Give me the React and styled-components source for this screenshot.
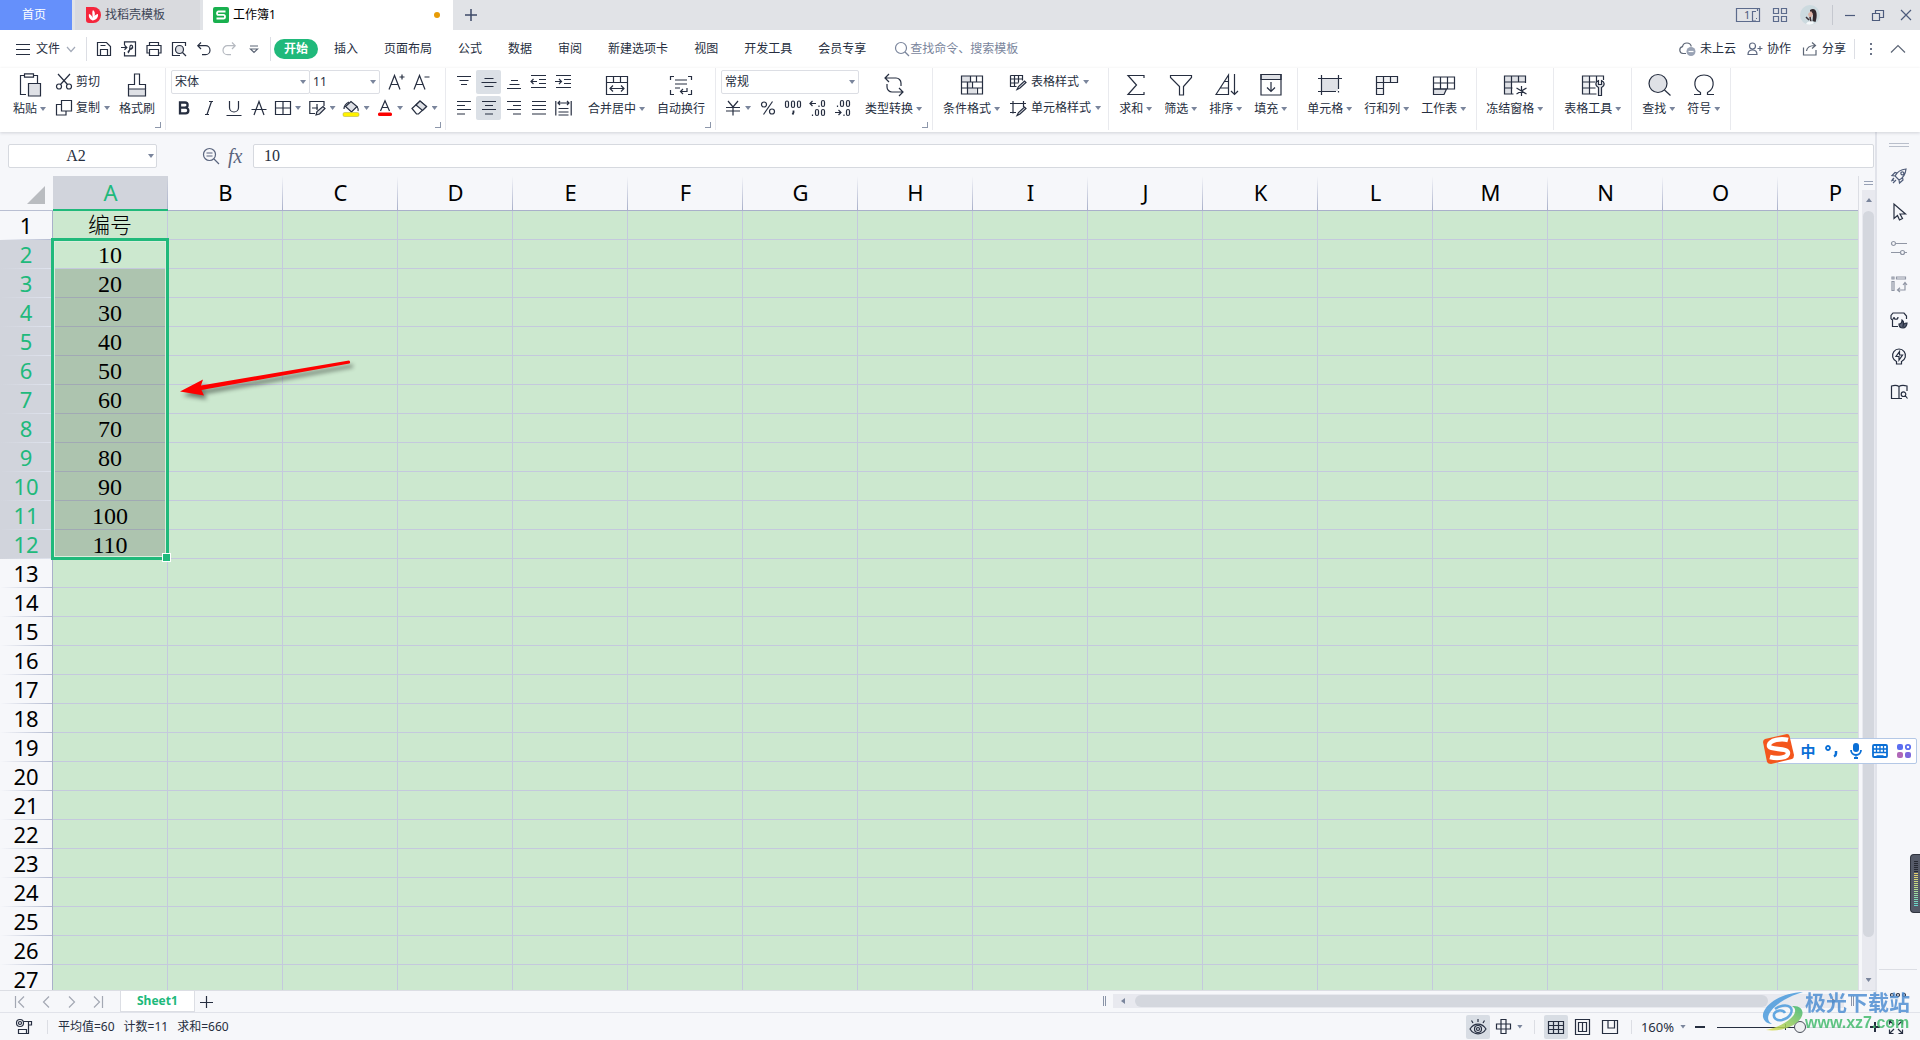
import React, { useState } from 'react';
import styled, { createGlobalStyle, css } from 'styled-components';

const INK = '#262e40';
const MUTED = '#7a859c';
const GREEN = '#20b97b';
const LINE = '#dcdee4';
const PANEL = '#f6f7fa';
const UI_FONT = '"Noto Sans", "Noto Sans CJK SC", sans-serif';
const CELL_FONT = '"Liberation Serif", "Noto Sans CJK SC", serif';

const GlobalStyle = createGlobalStyle`
  * {
    box-sizing: border-box;
  }
  body {
    margin: 0;
    overflow: hidden;
    color: ${INK};
    font-family: ${UI_FONT};
    font-size: 12px;
    line-height: 18px;
  }
  button,
  input,
  select {
    margin: 0;
    padding: 0;
    border: 0;
    background: none;
    color: inherit;
    font: inherit;
    white-space: nowrap;
  }
  input,
  select {
    outline: none;
  }
`;

const shade = '#dfe1e6';

/* [width, height, drawing] */
const ICONS = {
  menu: [14, 14, <path d="M0 2.500h14M0 7.500h14M0 12.500h14" />],
  chevronDown: [10, 10, <path d="M1 3l4 4.500L9 3" stroke="#a3aab8" />],
  chevronUp: [16, 10, <path d="M1 8.500l7-7 7 7" stroke="#5d6676" />],
  save: [16, 16, <path d="M1.500 1.500h9l4 4v9h-13zM4.500 14V8.500h7V14M4.500 4.500h5" />],
  exportPdf: [16, 16, <path d="M3.500 4V.800h11v14h-11V11M0 6.500h5.500M3.500 4.300l2.300 2.200-2.300 2.200M7 12c1-1 2-4 2-6.500 0-2 3-1.500 2.500.500-.500 2-4.500 3-4.500 5M9 8.500c1 0 2-.500 3-2" />],
  print: [16, 16, <path d="M3.500 4.500v-3h9v3M3.500 12H1V4.500h14V12h-2.500M3.500 8.500h9v6h-9z" />],
  preview: [16, 16, <><path d="M14.500 5V1.500h-13v13H9" /><circle cx="8.500" cy="8.500" r="4" fill={shade} /><path d="M11.500 11.500l3.500 3.500" /></>],
  undo: [14, 14, <path d="M4 .500L.800 3.700 4 7M1 3.700h7.500a4.500 4.500 0 0 1 0 9H5" />],
  redo: [14, 14, <path d="M10 .500l3.200 3.200L10 7M13 3.700H5.500a4.500 4.500 0 0 0 0 9H9" stroke="#b5b9c0" />],
  more: [10, 10, <path d="M1 2h8M1.500 5L5 8.500 8.500 5z" stroke="#5d6676" />],
  search: [16, 16, <><circle cx="7" cy="7" r="5.500" /><path d="M11 11l4 4" /></>],
  cloud: [17, 16, <><path d="M7 12.500H4a3.500 3.500 0 0 1-.500-6.900A4.500 4.500 0 0 1 12.300 5.500" stroke="#5d6676" /><circle cx="12" cy="10.500" r="4.500" fill="#9aa3b5" stroke="none" /><path d="M9.500 10.500h5" stroke="#fff" /></>],
  people: [16, 16, <path d="M1 13.500c0-3 2-4.500 4.500-4.500S10 10.500 10 13.500zM5.500 8a3 3 0 1 0 0-6 3 3 0 0 0 0 6zM10.500 7.500h5M13 5v5" stroke="#5d6880" />],
  share: [16, 16, <path d="M1.500 6.500v7.500h12.500V9M4.500 10c.500-4 3-5.500 8.500-5.500M10 1.500l3.500 3L10 7.500" stroke="#5d6676" />],
  dots: [4, 14, <path d="M1 2h2M1 7h2M1 12h2" strokeWidth="2" stroke="#6b7488" />],
  screens: [24, 14, <path d="M.500.500h23v13H.500zM16.500 13V3.500h3.500M17 13h3M21.500 3v-2M20 10.500h1" stroke="#5c6b8c" />],
  apps: [16, 16, <path d="M1.500 1.500h5v5h-5zM9.500 1.500h5v5h-5zM1.500 9.500h5v5h-5zM9.500 9.500h5v5h-5z" stroke="#5c6b8c" />],
  minimize: [12, 12, <path d="M1 6.500h10" stroke="#4c5b7c" />],
  restore: [12, 12, <path d="M.500 4.500h7v7h-7zM3.500 4V1.500h8v7H8" stroke="#4c5b7c" />],
  close: [12, 12, <path d="M1 1l10 10M11 1L1 11" stroke="#4c5b7c" />],
  plus: [14, 14, <path d="M7 1v12M1 7h12" stroke="#3d4a68" strokeWidth="1.500" />],
  docer: [16, 16, <><path d="M1 0h7.500a7.500 8 0 0 1 0 16H4a3 3 0 0 1-3-3z" fill="#f5263c" stroke="none" /><path d="M7.500 13.500C4 12 3.500 9 4 7c2 .500 3 2 3.500 4 .500-3-1-5 .500-8 2 1.500 2.200 4 1.500 6 .800-1 2-2 3.500-2 .500 3.500-2 6-5.500 6.500z" fill="#fff" stroke="none" /></>],
  wps: [16, 16, <><rect width="16" height="16" rx="2" fill="#19b04f" stroke="none" /><path d="M12.500 4.500H5.500c-2 0-2 3.300 0 3.300h5c2 0 2 3.700 0 3.700H3.500" stroke="#fff" strokeWidth="1.800" /></>],
  paste: [24, 24, <><path d="M8 21.500H2.500v-19H6M16 2.500h3.500V10" /><path d="M6.500.800h9v3.400h-9z" /><path d="M10.500 10.500h12v12.500h-12z" fill={shade} /></>],
  cut: [16, 16, <><path d="M2 0l9.500 10.500M14 0L4.500 10.500" /><circle cx="3" cy="12.500" r="2.500" /><circle cx="13" cy="12.500" r="2.500" /></>],
  copy: [16, 16, <path d="M5.500.500h10v10.500h-10zM5 4.500H.500v10.500h9.500V11.500" />],
  painter: [24, 24, <><path d="M3.500 16h17v7h-17z" fill={shade} /><path d="M3.500 16v-4.500h6V1h5v10.500h6V16" /></>],
  bold: [16, 16, <path d="M4 2.500h5a2.500 2.500 0 0 1 0 5.200H4zM4 7.700h5.500a2.800 2.800 0 0 1 0 5.700H4z" strokeWidth="2.300" />],
  italic: [16, 16, <path d="M8 1.500h4M4 14.500h4M10.500 1.500L6 14.500" />],
  underline: [16, 16, <path d="M3.500 1v6.500a4.500 4.500 0 0 0 9 0V1M.500 15.500h15" />],
  strike: [16, 16, <path d="M3 15l5-13.500L13 15M.500 9.500h15" />],
  border: [16, 16, <path d="M.500 1.500h15v13h-15zM8 1.500v13M.500 8h15" />],
  drawBorder: [17, 16, <><path d="M6 13.500H.800v-12H15V6M3 8h6M8 4v6" /><path d="M7 15l1-3.500 6-5 2 2-5.500 5.500z" fill={shade} /></>],
  fill: [17, 17, <><path d="M2.500 6.500L8 1.500l6 5-5.500 5.500z" fill={shade} /><path d="M1 9c0-3 2-5.500 5-7M14 6.500c1 1.500 1.500 3 1 4.500" /><rect y="12.500" width="16" height="4" rx="1.500" fill="#fff200" stroke="#a9a648" strokeWidth=".5" /></>],
  fontColor: [16, 17, <><path d="M3.500 11L8 .800 12.500 11M5 7.500h6" /><rect x="1" y="12.500" width="14" height="3.500" rx="1.500" fill="#fb0000" stroke="none" /></>],
  eraser: [17, 16, <><path d="M1 8.500L9 1l6.500 5.500-8 7.500h-2z" /><path d="M5 5l4-4 6.500 5.500-4 4z" fill={shade} /></>],
  fontUp: [17, 17, <path d="M1 15.500L6.500 1.500 12 15.500M3 10.500h7M14 .500v5M11.500 3h5" />],
  fontDown: [17, 17, <path d="M1 15.500L6.500 1.500 12 15.500M3 10.500h7M11.500 3h5" />],
  top: [16, 16, <path d="M1 2.500h14M3.500 6.500h9M5 10.500h6" />],
  middle: [16, 16, <path d="M3.500 4.500h9M.500 8.500h15M3.500 12.500h9" />],
  bottom: [16, 16, <path d="M5 6.500h7M3.500 10.500h10M1 14.500h14" />],
  outdent: [17, 16, <path d="M1 1.500h15M9 5.500h7M9 9.500h7M1 13.500h15M1 7.500h6M3.500 5L1 7.500 3.500 10" />],
  indent: [17, 16, <path d="M1 1.500h15M9 5.500h7M9 9.500h7M1 13.500h15M0 7.500h6M4 5l2.500 2.500L4 10" />],
  left: [16, 16, <path d="M1 1.500h14M1 5.500h8M1 9.500h14M1 14h8" />],
  center: [16, 16, <path d="M1 1.500h14M4 5.500h8M1 9.500h14M4 14h8" />],
  right: [16, 16, <path d="M1 1.500h14M7 5.500h8M1 9.500h14M7 14h8" />],
  justify: [16, 16, <path d="M1 1.500h14M1 5.500h14M1 9.500h14M1 14h14" />],
  spread: [17, 16, <path d="M.800 1v14.500M16.200 1v14.500M3 3h11M5 1L3 3l2 2M12 1l2 2-2 2M3.500 8.500h10M3.500 12h10M3.500 15h10" />],
  merge: [24, 24, <path d="M1.500 3.500h21v18h-21zM1.500 9.500h21M8.500 3.500v6M15.500 3.500v6M5 15.500h14M8 12.500l-3 3 3 3M16 12.500l3 3-3 3" />],
  wrap: [24, 24, <path d="M5 3.500H1.500V7M19 3.500h3.500V7M1.500 17v4.500H5M22.500 17v4.500H19M6 7h12M6 11h12M6 15h5M18 15v3.500h-6M14 16l-2.500 2.500L14 21" />],
  yen: [16, 16, <path d="M3 1l5 6 5-6M1 7.500h14M1 11h14M8 7v8.500" />],
  percent: [16, 16, <><circle cx="4" cy="4.500" r="2.500" /><circle cx="12" cy="11.500" r="2.500" /><path d="M12.500 1.500L3.500 14.500" /></>],
  thousands: [18, 16, <><rect x="1.500" y="1" width="3" height="6.500" rx="1.500" /><rect x="7.500" y="1" width="3" height="6.500" rx="1.500" /><rect x="13.500" y="1" width="3" height="6.500" rx="1.500" /><path d="M9.500 10.500v2l-1 2" strokeWidth="1.800" /></>],
  decUp: [18, 18, <><path d="M1 4.500h6M3.500 2L1 4.500 3.500 7M10 6.500v1.500M3.500 15.500v1.500" /><rect x="12.500" y="1.500" width="3" height="6" rx="1.500" /><rect x="6.500" y="10.500" width="3" height="6" rx="1.500" /><rect x="12.500" y="10.500" width="3" height="6" rx="1.500" /></>],
  decDown: [18, 18, <><path d="M3.500 6.500v1.500M1 13.500h6M4.500 11L7 13.500 4.500 16M10 15.500v1.500" /><rect x="6.500" y="1.500" width="3" height="6" rx="1.500" /><rect x="12.500" y="1.500" width="3" height="6" rx="1.500" /><rect x="12.500" y="10.500" width="3" height="6" rx="1.500" /></>],
  convert: [24, 24, <path d="M7 1L3 5l4 4M3.500 5h10.500a5 5 0 0 1 5 5v3M17 15l4 4-4 4M20.500 19H10a5 5 0 0 1-5-5v-3" />],
  condFormat: [24, 24, <><path d="M1.500 3h9v6h-9zM10.500 9h-4v6h4zM7 15h9v6H7z" fill={shade} stroke="none" /><path d="M1.500 3h21v18h-21zM1.500 9h21M1.500 15h21M10.500 3v6M16.500 3v6M7.500 9v6M12.500 9v6M7.500 15v6M17.500 15v6" /></>],
  tableStyle: [17, 17, <><path d="M.500 1.500h12v5M.500 1.500v11h6M.500 5h12M.500 9h8M4.500 1.500v11M8.500 1.500v7" /><path d="M7 15.500l1.500-3 6-5.500 1.500 1.500-6 5.500z" fill={shade} /></>],
  cellStyle: [17, 17, <><path d="M3 1v12.500M0 3.500h16M0 12.500h6M13.500 1v6" /><path d="M7 15.500l1.500-3 6-5.500 1.500 1.500-6 5.500z" fill={shade} /></>],
  sum: [24, 24, <path d="M20 5V2.500H4L12.500 12 4 21.500h16V19" />],
  filter: [24, 24, <path d="M1.500 2.500h21v2l-8 9v8.500h-4v-8.500l-9-9z" />],
  sort: [24, 24, <path d="M2 21.500L14.500 2v19.500zM6.500 15h8M10.500 8.500h4M20.500 1v20.500M17 18l3.500 3.500L24 18" />],
  fillDown: [24, 24, <><path d="M2 1.500h20v5H2z" fill={shade} /><path d="M2 1.500h20v20.500H2zM12 9v9.500M8 14.500l4 4 4-4" /></>],
  cell: [24, 24, <><path d="M4 5h16v13H4z" fill={shade} stroke="none" /><path d="M0 5.500h24M3.500 2v20M20.500 2v14M0 18.500h18M20.500 18v1.500" /></>],
  rowCol: [24, 24, <><path d="M2 3.500h21v6H2zM2 9.500h7v12H2z" fill="#f0f1f3" stroke="none" /><path d="M1.500 3.500h21v6h-14v12h-7zM8.500 3.500v6M15.500 3.500v6M1.500 9.500h7M1.500 15.500h7" /></>],
  sheet: [24, 24, <><path d="M1.500 16h13l-2.500 5.500H1.500z" fill={shade} /><path d="M1.500 4h21v12h-21zM1.500 10h21M8.500 4v12M15.500 4v12" /></>],
  freeze: [24, 24, <><path d="M1.500 3h21v6h-14v12h-7z" fill={shade} stroke="none" /><path d="M22.500 10V3h-21v18h9M1.500 9h21M1.500 15h8M8.500 3v18M15.500 3v6M18.500 13v10M13.500 15l10 6M23.500 15l-10 6" /></>],
  tableTool: [24, 24, <><path d="M2 3h7v18H2z" fill="#eceef1" stroke="none" /><path d="M22.500 7V3h-21v18h14M1.500 9h13M1.500 15h13M8.500 3v18M15.500 3v6" /><path d="M17.500 22.500v-8c-4-2-3-6 0-7v4h3v-4c3 1 4 5 0 7v8z" fill={shade} /></>],
  find: [24, 24, <><circle cx="11" cy="10.500" r="9" fill={shade} /><path d="M17.500 17l6 5.500" /></>],
  omega: [24, 24, <path d="M2 21.500h6.500V19.500C0 15 1 2 12 2s12 13 3.500 17.500v2H22" />],
  zoomOut: [18, 18, <><circle cx="7.500" cy="7.500" r="6" /><path d="M12 12l5 5M4.500 6h6M4.500 9h6" /></>],
  rocket: [18, 18, <path d="M5 9c2-4 5-6.500 11-7-.500 5.500-3 9-7 11zM5 9l-3-.500L5 5.500 7.500 6M9 13l.500 3L13 13l-.500-2.500M13 5a1.500 1.500 0 1 1-2 2 1.500 1.500 0 0 1 2-2M4 11l-2 2M6 13l-3 3M4 13l-3 1" stroke="#4f5c78" />],
  pointer: [18, 18, <path d="M4 1v14.500l3.500-3 2 4.500 3-1.500L10 11h5.500z" />],
  sliders: [18, 18, <><circle cx="3.500" cy="4.500" r="2" stroke="#9096a4" /><circle cx="12.500" cy="13.500" r="2" stroke="#9096a4" /><path d="M5.500 4.500H17M1 13.500h9.500M14.500 13.500H17" stroke="#9096a4" /></>],
  pivot: [18, 18, <path d="M2 2h2v2H2zM6.500 2h9v2h-9zM2 6.500h2v9H2zM15 8v7H8M13 10l2-2.500L17 10M10 12.800L7.500 15l2.500 2" stroke="#9096a4" />],
  shop: [18, 18, <><path d="M8 15.500H2.500V9M1 8V4.500L3 2h11l2.500 3V8M1 8c1.500 1 3 0 3-2M4 6c0 3 4 3 4 0" /><path d="M9 13c2 0 3-1 3-4 3 2 1 4 1 7 0-2 1-4 4-4 0 3-2 5-4 5s-4-1-4-4z" fill="#596174" /></>],
  bulb: [18, 18, <path d="M6.500 17v-2.500a6.500 6.500 0 1 1 5 0V17zM9.500 4.500L6 9.500h3v3.500l3.500-5h-3z" />],
  book: [18, 18, <path d="M9 3.500v12H1.500V3C5 2 7.500 2.500 9 3.500zM9 3.500C10.500 2.500 13 2 17 3v5M9 15.500h3M13.500 13.500a2.300 2.300 0 1 0 0-4.600 2.300 2.300 0 0 0 0 4.600zM15.500 13l2 2.500" />],
  moreH: [18, 6, <path d="M3 1.500a1.500 1.500 0 1 0 0 3 1.500 1.500 0 0 0 0-3zM9 1.500a1.500 1.500 0 1 0 0 3 1.500 1.500 0 0 0 0-3zM15 1.500a1.500 1.500 0 1 0 0 3 1.500 1.500 0 0 0 0-3z" />],
  grip: [20, 5, <path d="M0 .500h20M0 3.500h20" stroke="#b9bfcb" />],
  first: [12, 14, <path d="M1.500 1v12M10 1.500L4.500 7l5.500 5.500" stroke="#a3a8b3" />],
  prev: [12, 14, <path d="M9 1.500L3.500 7 9 12.500" stroke="#a3a8b3" />],
  next: [12, 14, <path d="M3 1.500L8.500 7 3 12.500" stroke="#a3a8b3" />],
  last: [12, 14, <path d="M10.500 1v12M2 1.500L7.500 7 2 12.500" stroke="#a3a8b3" />],
  record: [18, 18, <><circle cx="5" cy="5" r="3.500" /><circle cx="5" cy="5" r="1.500" /><path d="M8.500 3.500h8V7h-3M13.500 3.500v12H3.500v-4h8v4" /></>],
  eye: [18, 18, <><path d="M1 11c4-6.500 12-6.500 16 0-4 6.500-12 6.500-16 0zM9 4V1M4 5L2.500 2.500M14 5l1.500-2.500" /><circle cx="9" cy="11" r="3.500" /><circle cx="9" cy="11" r="1.500" /></>],
  cross: [18, 18, <path d="M6 1.500h5v14H6zM1.500 6h14v5h-14z" />],
  gridView: [18, 18, <path d="M1.500 3.500h15v12h-15zM1.500 7.500h15M1.500 11.500h15M6.500 3.500v12M11.500 3.500v12" />],
  pageView: [18, 18, <path d="M1.500 1.500h14v15h-14zM4.500 4.500h8v9h-8zM8.500 4.500v9" />],
  splitView: [18, 18, <path d="M1.500 2.500h15v13h-15zM7 2.500v7.500h6.500V2.500" />],
  minus: [12, 12, <path d="M1 6h10" strokeWidth="2" />],
  plusBold: [12, 12, <path d="M1 6h10M6 1v10" strokeWidth="2" />],
  fullscreen: [16, 16, <path d="M10 6l4.500-4.500M10.500 1.500h4v4M6 6L1.500 1.500M1.500 5.500v-4h4M10 10l4.500 4.500M10.500 14.500h4v-4M6 10l-4.500 4.500M1.500 10.500v4h4" />],
  sheetPlus: [14, 14, <path d="M7.500 1v12M1 7.500h13" />],
  corner: [19, 19, <path d="M18 0v18H0z" fill="#b9bcc0" stroke="none" />],
};

const Svg = styled.svg`
  flex: none;
  display: block;
  fill: none;
  stroke: currentColor;
  stroke-width: 1.2;
  overflow: visible;
`;

function Icon({ name, className }) {
  const [w, h, drawing] = ICONS[name];
  return (
    <Svg className={className} width={w} height={h} viewBox={`0 0 ${w} ${h}`} aria-hidden="true">
      {drawing}
    </Svg>
  );
}

const Caret = styled.i`
  flex: none;
  width: 6px;
  height: 4px;
  background: ${MUTED};
  clip-path: polygon(0 0, 100% 0, 50% 100%);
  ${({ $dir }) => $dir === 'up' && 'transform: rotate(180deg);'}
  ${({ $dir }) => $dir === 'left' && 'transform: rotate(90deg);'}
  ${({ $dir }) => $dir === 'right' && 'transform: rotate(-90deg);'}
`;

const Page = styled.div`
  display: flex;
  flex-direction: column;
  height: 100vh;
  overflow: hidden;
  background: ${PANEL};
`;

/* ---- title bar ---- */
const TitleBar = styled.header`
  display: flex;
  flex: none;
  height: 30px;
  background: #e1e3e7;
`;

const WindowTab = styled.button`
  display: flex;
  align-items: center;
  gap: 4px;
  width: ${({ $width }) => $width}px;
  padding: 0 10px;
  margin-right: 3px;
  background: #d9dade;
  color: #3d4557;
  text-align: left;
  ${({ $home }) => $home && 'background: #6590fb; color: #fff; padding: 0 22px;'}
  ${({ $active }) => $active && 'background: #fff; color: #000; margin: 0;'}
`;

const UnsavedDot = styled.span`
  width: 6px;
  height: 6px;
  margin: 0 3px 0 auto;
  border-radius: 50%;
  background: #e79b06;
`;

const NewTab = styled.button`
  display: grid;
  place-items: center;
  width: 36px;
`;

const WindowTools = styled.div`
  display: flex;
  align-items: center;
  gap: 12px;
  margin-left: auto;
`;

const Screens = styled.button`
  display: grid;
  place-items: center start;
  > * {
    grid-area: 1 / 1;
  }
  span {
    padding-left: 8px;
    font-size: 11px;
    line-height: 14px;
    color: #4c5b7c;
  }
`;

const PlainButton = styled.button`
  display: grid;
  place-items: center;
`;

const WindowControls = styled.div`
  display: flex;
  height: 20px;
  padding-left: 3px;
  border-left: 1px solid #c5c8cf;
  button {
    display: grid;
    place-items: center;
    width: 28px;
  }
`;

/* ---- menu bar ---- */
const MenuBar = styled.nav`
  display: flex;
  flex: none;
  align-items: center;
  height: 38px;
  background: #fff;
`;

const FileButton = styled.button`
  display: flex;
  align-items: center;
  gap: 6px;
  padding: 0 10px 0 16px;
`;

const Divider = styled.span`
  flex: none;
  width: 1px;
  height: ${({ $height = 24 }) => $height}px;
  background: ${LINE};
`;

const QuickTools = styled.div`
  display: flex;
  padding-left: 4px;
  margin-right: 4px;
  button {
    display: grid;
    place-items: center;
    width: 25px;
    height: 24px;
  }
`;

const MenuItem = styled.button`
  height: 20px;
  padding: 0 10px;
  margin: 0 3px;
  line-height: 20px;
  border-radius: 10px;
  ${({ $active }) => $active && `background: ${GREEN}; color: #fff; font-weight: 700;`}
`;

const CommandSearch = styled.label`
  display: flex;
  align-items: center;
  margin-left: 15px;
  color: ${MUTED};
  input {
    width: 130px;
  }
  input::placeholder {
    color: ${MUTED};
    opacity: 1;
  }
`;

const AccountTools = styled.div`
  display: flex;
  align-items: center;
  gap: 11px;
  padding-right: 8px;
  margin-left: auto;
  button {
    display: flex;
    align-items: center;
    gap: 4px;
  }
`;

const MenuEdge = styled.div`
  display: flex;
  align-items: center;
  gap: 17px;
  padding: 0 14px;
`;

/* ---- ribbon ---- */
const Ribbon = styled.section`
  position: relative;
  display: flex;
  flex: none;
  height: 64px;
  background: #fff;
  box-shadow: 0 1px 3px rgba(60, 66, 84, 0.2);
`;

const Group = styled.div`
  position: relative;
  display: flex;
  height: 62px;
  padding: 2px 4px 0 ${({ $lead = 4 }) => $lead}px;
  border-right: 1px solid #e9eaee;
  ${({ $launcher }) =>
    $launcher &&
    css`
      &::after {
        content: '';
        position: absolute;
        right: 4px;
        bottom: 2px;
        width: 5px;
        height: 5px;
        border: solid #8d97ab;
        border-width: 0 1px 1px 0;
      }
    `}
`;

const BigButton = styled.button`
  display: flex;
  flex-direction: column;
  align-items: center;
  height: 50px;
  padding: 3px 6px 0;
  span {
    display: flex;
    align-items: center;
    gap: 3px;
    padding-top: 3px;
    line-height: 18px;
  }
`;

const Rows = styled.div`
  display: grid;
  grid-template-rows: 24px 24px;
  gap: 2px;
  padding-right: ${({ $end = 0 }) => $end}px;
`;

const Row = styled.div`
  display: flex;
`;

const SmallButton = styled.button`
  display: flex;
  align-items: center;
  gap: 4px;
  padding: 0 3px 0 4px;
`;

const Tool = styled.button`
  display: flex;
  align-items: center;
  justify-content: center;
  gap: 4px;
  width: ${({ $wide }) => ($wide ? 34 : 25)}px;
  height: 24px;
  border-radius: 2px;
  background: ${({ $pressed }) => ($pressed ? '#dbe0e6' : 'none')};
`;

const Picker = styled.label`
  display: flex;
  align-items: center;
  width: ${({ $width }) => $width}px;
  height: 24px;
  padding: 0 3px;
  border: 1px solid ${LINE};
  border-radius: 2px;
  & + & {
    margin: 0 4px 0 -1px;
  }
  select {
    flex: 1;
    min-width: 0;
    height: 22px;
    appearance: none;
  }
`;

/* ---- work area ---- */
const Body = styled.main`
  display: flex;
  flex: 1;
  min-height: 0;
`;

const Workbook = styled.div`
  display: flex;
  flex: 1;
  flex-direction: column;
  min-width: 0;
`;

const FormulaBar = styled.div`
  display: flex;
  flex: none;
  align-items: center;
  height: 44px;
  padding: 4px 1px 0 8px;
`;

const field = css`
  height: 24px;
  border: 1px solid #d6d9df;
  border-radius: 2px;
  background: #fff;
  font-family: ${CELL_FONT};
  font-size: 16px;
`;

const NameBox = styled.label`
  ${field}
  display: flex;
  align-items: center;
  width: 149px;
  padding-right: 2px;
  input {
    flex: 1;
    min-width: 0;
    padding-right: 5px;
    text-align: center;
  }
`;

const FormulaTools = styled.div`
  display: flex;
  align-items: center;
  gap: 8px;
  width: 96px;
  padding-left: 45px;
  color: #5a657e;
`;

const Fx = styled.button`
  font-family: ${CELL_FONT};
  font-size: 20px;
  font-style: italic;
`;

const FormulaInput = styled.input`
  ${field}
  flex: 1;
  min-width: 0;
  padding: 0 10px;
`;

const GridArea = styled.div`
  display: flex;
  flex: 1;
  min-height: 0;
`;

const Viewport = styled.div`
  position: relative;
  flex: 1;
  min-width: 0;
  overflow: hidden;
  background: #cce8cf;
`;

const SheetTable = styled.table`
  width: 1px;
  table-layout: fixed;
  border-spacing: 0;
  col {
    width: 115px;
  }
  col:first-child {
    width: 53px;
  }
`;

const headText = css`
  padding: 0 0 2px;
  font-size: 22px;
  font-weight: 400;
  line-height: 26px;
  color: ${({ $on }) => ($on ? GREEN : '#000')};
  background-color: ${({ $on }) => ($on ? '#d1d4dc' : PANEL)};
`;

const ColHead = styled.th`
  ${headText}
  height: 35px;
  border-bottom: ${({ $on }) => ($on ? `2px solid ${GREEN}` : '1px solid #a9b0ca')};
  background-image: linear-gradient(to bottom, rgba(169, 176, 202, 0), #a9b0ca);
  background-position: right top;
  background-repeat: no-repeat;
  background-size: 1px 100%;
`;

const CornerHead = styled.th`
  height: 35px;
  padding: 5px 7px 0 0;
  border-bottom: 1px solid #b9bfd2;
  background: ${PANEL};
  svg {
    margin-left: auto;
  }
`;

const RowHead = styled.th`
  ${headText}
  height: 29px;
  border-right: 1px solid #a9b0ca;
  background-image: linear-gradient(to right, rgba(185, 192, 214, 0), ${({ $on }) => ($on ? '#dfe3ee' : '#b3bad0')});
  background-position: left bottom;
  background-repeat: no-repeat;
  background-size: 100% 1px;
`;

const Cell = styled.td`
  position: ${({ $anchor }) => ($anchor ? 'relative' : 'static')};
  height: 29px;
  padding: 2px 0 0;
  border: solid ${({ $picked }) => ($picked ? '#a1a9b4' : '#c4c9dd')};
  border-width: 0 1px 1px 0;
  background: ${({ $picked }) => ($picked ? '#adc4af' : 'none')};
  color: #000;
  font-family: ${CELL_FONT};
  font-size: ${({ $title }) => ($title ? 22 : 24)}px;
  font-weight: ${({ $title }) => ($title ? 300 : 400)};
  line-height: 26px;
  text-align: center;
`;

const Selection = styled.div`
  position: absolute;
  top: -2px;
  right: -2px;
  left: -2px;
  height: 322px;
  border: 3px solid ${GREEN};
  box-shadow: inset 0 0 0 1px #d9eedc;
  pointer-events: none;
  &::after {
    content: '';
    position: absolute;
    right: -5px;
    bottom: -5px;
    width: 7px;
    height: 7px;
    border: 1px solid #fff;
    background: ${GREEN};
  }
`;

const Arrow = styled.svg`
  position: absolute;
  top: 180px;
  left: 172px;
  overflow: visible;
  filter: drop-shadow(3px 4px 2px rgba(0, 0, 0, 0.45));
`;

const VScroll = styled.div`
  display: flex;
  flex: none;
  flex-direction: column;
  width: 17px;
  padding-left: 3px;
  border-left: 1px solid ${LINE};
`;

const SplitHandle = styled.div`
  height: 4px;
  margin: 5px 2px;
  border: solid #98a2b6;
  border-width: 1px 0;
`;

const Track = styled.div`
  display: flex;
  flex: 1;
  flex-direction: ${({ $horizontal }) => ($horizontal ? 'row' : 'column')};
  background: #e8e9ef;
`;

const ScrollArrow = styled.button`
  display: grid;
  flex: none;
  place-items: center;
  width: ${({ $horizontal }) => ($horizontal ? 21 : 13)}px;
  height: ${({ $horizontal }) => ($horizontal ? 14 : 20)}px;
`;

const Thumb = styled.div`
  flex: ${({ $share }) => $share};
  margin: 1px;
  border-radius: 6px;
  background: #d4d7de;
`;

const Rest = styled.div`
  flex: ${({ $share }) => $share};
`;

const SheetBar = styled.div`
  display: grid;
  flex: none;
  grid-template-columns: minmax(0, 10fr) minmax(0, 7fr);
  height: 22px;
  border-top: 1px solid ${LINE};
`;

const SheetTabs = styled.div`
  display: flex;
  align-items: center;
  padding-left: 7px;
`;

const NavButton = styled.button`
  display: grid;
  place-items: center;
  width: 26px;
`;

const SheetTab = styled.button`
  height: 21px;
  padding: 0 16px;
  margin-left: 9px;
  margin-right: 4px;
  border: solid ${LINE};
  border-width: 0 1px 1px;
  background: #fff;
  color: ${GREEN};
  font-weight: 700;
`;

const HScroll = styled.div`
  display: flex;
  gap: 7px;
  padding: 3px 21px 4px 0;
`;

const PaneGrip = styled.div`
  width: 3px;
  margin: 2px 0;
  border: solid #8a94a8;
  border-width: 0 1px;
`;

const SidePanel = styled.aside`
  display: flex;
  flex: none;
  flex-direction: column;
  align-items: center;
  width: 45px;
  padding-top: 11px;
  border-left: 2px solid #e1e3ea;
`;

const SideTools = styled.div`
  padding-top: 10px;
`;

const SideButton = styled.button`
  display: grid;
  place-items: center;
  width: 34px;
  height: 36px;
`;

const SideFooter = styled.div`
  display: flex;
  flex-direction: column;
  align-items: center;
  align-self: stretch;
  height: 43px;
  padding-top: 22px;
  margin: auto 3px 0 2px;
  border-top: 1px solid ${LINE};
`;

/* ---- status bar ---- */
const StatusBar = styled.footer`
  display: flex;
  flex: none;
  align-items: center;
  height: 28px;
  border-top: 1px solid #e1e3ea;
`;

const RecordButton = styled.button`
  display: grid;
  place-items: center;
  width: 47px;
`;

const Summary = styled.div`
  display: flex;
  gap: 9px;
  padding-left: 10px;
`;

const ViewTools = styled.div`
  display: flex;
  align-items: center;
  gap: 3px;
  margin-left: auto;
  padding-right: 12px;
`;

const ViewButton = styled.button`
  display: flex;
  align-items: center;
  justify-content: center;
  gap: 4px;
  width: ${({ $wide }) => ($wide ? 32 : 24)}px;
  height: 24px;
  border-radius: 2px;
  background: ${({ $pressed }) => ($pressed ? '#d8dde4' : 'none')};
`;

const ViewDivider = styled(Divider)`
  margin: 0 6px;
`;

const ZoomValue = styled.button`
  display: flex;
  align-items: center;
  gap: 6px;
  margin-right: 5px;
  font-size: 13px;
`;

const ZoomRange = styled.input`
  width: 144px;
  height: 14px;
  margin: 0 5px 0 8px;
  appearance: none;
  background:
    linear-gradient(${INK}, ${INK}) 68px 4px / 1px 6px no-repeat,
    linear-gradient(to right, ${INK} 57%, #d5d8df 57%) 0 7px / 100% 1px no-repeat;
  &::-webkit-slider-thumb {
    width: 12px;
    height: 12px;
    appearance: none;
    border: 1px solid #4a4f5a;
    border-radius: 50%;
    background: #eef0f2;
  }
`;

/* ---- floating pieces ---- */
const InputMethod = styled.div`
  position: fixed;
  right: 3px;
  bottom: 276px;
  display: flex;
  align-items: center;
  width: 140px;
  height: 26px;
  padding-left: 18px;
  border: 1px solid #b4c8e6;
  border-radius: 2px;
  background: #fff;
  color: #0a6fd6;
  button {
    display: grid;
    place-items: center;
    width: 24px;
    height: 24px;
    font-size: 15px;
    font-weight: 700;
  }
`;

const ImeLogo = styled.svg`
  position: absolute;
  top: -6px;
  left: -16px;
`;

const LevelMeter = styled.div`
  position: fixed;
  right: 0;
  bottom: 127px;
  width: 10px;
  height: 59px;
  padding: 6px 0 6px 3px;
  border: 1px solid #30343f;
  border-right: 0;
  border-radius: 4px 0 0 4px;
  background: #555a68;
  i {
    display: block;
    width: 4px;
    height: 45px;
    background:
      repeating-linear-gradient(to bottom, transparent 0 1px, #555a68 1px 2px),
      linear-gradient(to bottom, #252832 0 26%, #e8cf6b 26%, #b9df8b 60%, #62d6cf);
  }
`;

const Watermark = styled.div`
  position: fixed;
  right: 10px;
  bottom: 7px;
  display: flex;
  gap: 1px;
  opacity: 0.85;
  pointer-events: none;
  p {
    margin: 0;
    font-size: 21px;
    font-weight: 700;
    line-height: 22px;
    color: #4f8fd2;
  }
  p + p {
    font-family: 'Liberation Sans', sans-serif;
    font-size: 16px;
    line-height: 20px;
    color: #45bb6e;
  }
`;

const quickTools = ['save', 'exportPdf', 'print', 'preview', 'undo', 'redo', 'more'];
const menus = ['开始', '插入', '页面布局', '公式', '数据', '审阅', '新建选项卡', '视图', '开发工具', '会员专享'];
const columns = 'ABCDEFGHIJKLMNOP'.split('');
const rows = Array.from({ length: 27 }, (_, i) => i + 1);
const numbers = [10, 20, 30, 40, 50, 60, 70, 80, 90, 100, 110];
const sideTools = ['rocket', 'pointer', 'sliders', 'pivot', 'shop', 'bulb', 'book'];

function Big({ icon, label, plain }) {
  return (
    <BigButton>
      <Icon name={icon} />
      <span>
        {label}
        {!plain && <Caret />}
      </span>
    </BigButton>
  );
}

function Small({ icon, label, plain }) {
  return (
    <SmallButton>
      <Icon name={icon} />
      {label}
      {!plain && <Caret />}
    </SmallButton>
  );
}

function Tools({ names, pressed, drop }) {
  return names.map((name) => (
    <Tool key={name} aria-label={name} $pressed={name === pressed} $wide={drop}>
      <Icon name={name} />
      {drop && <Caret />}
    </Tool>
  ));
}

function Select({ label, value, width }) {
  return (
    <Picker $width={width}>
      <select aria-label={label} defaultValue={value}>
        <option>{value}</option>
      </select>
      <Caret />
    </Picker>
  );
}

function TopBar() {
  return (
    <TitleBar>
      <WindowTab $home $width={72}>
        首页
      </WindowTab>
      <WindowTab $width={125}>
        <Icon name="docer" />
        找稻壳模板
      </WindowTab>
      <WindowTab $active $width={250}>
        <Icon name="wps" />
        工作簿1
        <UnsavedDot />
      </WindowTab>
      <NewTab aria-label="新建">
        <Icon name="plus" />
      </NewTab>
      <WindowTools>
        <Screens>
          <Icon name="screens" />
          <span>1</span>
        </Screens>
        <PlainButton aria-label="应用">
          <Icon name="apps" />
        </PlainButton>
        <PlainButton aria-label="账号">
          <svg width="20" height="20" viewBox="0 0 20 20">
            <circle cx="10" cy="10" r="10" fill="#ccdadf" />
            <path d="M10 5c3-2 6-1 6.500 3 .500 3 0 6-1 9l-3-1 .500-6-3-2z" fill="#2f272c" />
            <path d="M8 9l3-3 2 3-2 4-2-1z" fill="#dcb3a6" />
            <path d="M6 12l3 3M10 12l1 5" stroke="#3b3238" strokeWidth="1.500" />
            <path d="M6 19c1-3 6-4 8-1-2 2-5 2-8 1z" fill="#f5f8fa" />
          </svg>
        </PlainButton>
        <WindowControls>
          {['minimize', 'restore', 'close'].map((name) => (
            <button key={name} aria-label={name}>
              <Icon name={name} />
            </button>
          ))}
        </WindowControls>
      </WindowTools>
    </TitleBar>
  );
}

function Menu() {
  return (
    <MenuBar>
      <FileButton>
        <Icon name="menu" />
        文件
        <Icon name="chevronDown" />
      </FileButton>
      <Divider />
      <QuickTools>
        {quickTools.map((name) => (
          <button key={name} aria-label={name}>
            <Icon name={name} />
          </button>
        ))}
      </QuickTools>
      <Divider />
      {menus.map((name, i) => (
        <MenuItem key={name} $active={i === 0}>
          {name}
        </MenuItem>
      ))}
      <CommandSearch>
        <Icon name="search" />
        <input aria-label="查找命令" placeholder="查找命令、搜索模板" />
      </CommandSearch>
      <AccountTools>
        <button>
          <Icon name="cloud" />
          未上云
        </button>
        <button>
          <Icon name="people" />
          协作
        </button>
        <button>
          <Icon name="share" />
          分享
        </button>
      </AccountTools>
      <Divider $height={20} />
      <MenuEdge>
        <PlainButton aria-label="更多">
          <Icon name="dots" />
        </PlainButton>
        <PlainButton aria-label="收起">
          <Icon name="chevronUp" />
        </PlainButton>
      </MenuEdge>
    </MenuBar>
  );
}

function RibbonBar() {
  return (
    <Ribbon>
      <Group $lead={7} $launcher>
        <Big icon="paste" label="粘贴" />
        <Rows>
          <Small icon="cut" label="剪切" plain />
          <Small icon="copy" label="复制" />
        </Rows>
        <Big icon="painter" label="格式刷" plain />
      </Group>
      <Group $lead={5} $launcher>
        <Rows>
          <Row>
            <Select label="字体" value="宋体" width={139} />
            <Select label="字号" value="11" width={71} />
            <Tools names={['fontUp', 'fontDown']} />
          </Row>
          <Row>
            <Tools names={['bold', 'italic', 'underline', 'strike']} />
            <Tools names={['border', 'drawBorder', 'fill', 'fontColor', 'eraser']} drop />
          </Row>
        </Rows>
      </Group>
      <Group $lead={5} $launcher>
        <Rows $end={6}>
          <Row>
            <Tools names={['top', 'middle', 'bottom', 'outdent', 'indent']} pressed="middle" />
          </Row>
          <Row>
            <Tools names={['left', 'center', 'right', 'justify', 'spread']} pressed="center" />
          </Row>
        </Rows>
        <Big icon="merge" label="合并居中" />
        <Big icon="wrap" label="自动换行" plain />
      </Group>
      <Group $lead={5} $launcher>
        <Rows>
          <Select label="数字格式" value="常规" width={138} />
          <Row>
            <Tools names={['yen']} drop />
            <Tools names={['percent', 'thousands', 'decUp', 'decDown']} />
          </Row>
        </Rows>
        <Big icon="convert" label="类型转换" />
      </Group>
      <Group>
        <Big icon="condFormat" label="条件格式" />
        <Rows>
          <Small icon="tableStyle" label="表格样式" />
          <Small icon="cellStyle" label="单元格样式" />
        </Rows>
      </Group>
      <Group>
        <Big icon="sum" label="求和" />
        <Big icon="filter" label="筛选" />
        <Big icon="sort" label="排序" />
        <Big icon="fillDown" label="填充" />
      </Group>
      <Group $lead={3}>
        <Big icon="cell" label="单元格" />
        <Big icon="rowCol" label="行和列" />
        <Big icon="sheet" label="工作表" />
      </Group>
      <Group $lead={3}>
        <Big icon="freeze" label="冻结窗格" />
      </Group>
      <Group>
        <Big icon="tableTool" label="表格工具" />
      </Group>
      <Group>
        <Big icon="find" label="查找" />
        <Big icon="omega" label="符号" />
      </Group>
    </Ribbon>
  );
}

function cellText(column, row) {
  if (column !== 'A') return null;
  return row === 1 ? '编号' : numbers[row - 2];
}

function Sheet() {
  return (
    <Viewport>
      <SheetTable>
        <colgroup>
          <col />
          {columns.map((c) => (
            <col key={c} />
          ))}
        </colgroup>
        <thead>
          <tr>
            <CornerHead>
              <Icon name="corner" />
            </CornerHead>
            {columns.map((c) => (
              <ColHead key={c} scope="col" $on={c === 'A'}>
                {c}
              </ColHead>
            ))}
          </tr>
        </thead>
        <tbody>
          {rows.map((r) => (
            <tr key={r}>
              <RowHead scope="row" $on={r >= 2 && r <= 12}>
                {r}
              </RowHead>
              {columns.map((c) => {
                const anchor = c === 'A' && r === 2;
                return (
                  <Cell key={c} $anchor={anchor} $picked={c === 'A' && r > 2 && r <= 12} $title={r === 1}>
                    {cellText(c, r)}
                    {anchor && <Selection />}
                  </Cell>
                );
              })}
            </tr>
          ))}
        </tbody>
      </SheetTable>
      <Arrow width="180" height="40" viewBox="0 0 180 40">
        <path d="M8 35.500L31 23.500l-2 6L177 4.500q2 1 .500 3L29.500 34l2.500 5.500z" fill="#fe0000" />
      </Arrow>
    </Viewport>
  );
}

function ImeBar() {
  return (
    <InputMethod>
      <ImeLogo width="34" height="34" viewBox="0 0 34 34">
        <path d="M3 6L25 1q2 0 2.500 2l4.500 19q0 3-2 4L9 31q-3 0-4-2L1 9q0-2 2-3z" fill="#f4561c" />
        <path d="M26 7C19 5 8 7 7 12c-1 6 19 2 19 8 0 5-11 6-18 4" fill="none" stroke="#fff" strokeWidth="4.500" />
      </ImeLogo>
      <button>中</button>
      <button aria-label="标点">
        <svg width="16" height="16" viewBox="0 0 16 16" fill="none" stroke="currentColor">
          <circle cx="4" cy="5" r="2" strokeWidth="1.800" />
          <path d="M12 8v2.500q0 2-2 3" strokeWidth="2.500" />
        </svg>
      </button>
      <button aria-label="语音">
        <svg width="16" height="18" viewBox="0 0 16 18" fill="none" stroke="currentColor" strokeWidth="2">
          <rect x="5" y="1" width="6" height="9" rx="3" fill="currentColor" stroke="none" />
          <path d="M3 8a5 5 0 0 0 10 0M8 13v1.500M6 16h4" strokeWidth="1.800" />
        </svg>
      </button>
      <button aria-label="键盘">
        <svg width="16" height="14" viewBox="0 0 16 14" fill="none" stroke="currentColor" strokeWidth="1.800">
          <rect x="1" y="1" width="14" height="12" rx="1" />
          <path d="M1 5h14M1 8.500h14M4.500 1v7.500M8 1v7.500M11.500 1v7.500M4.500 12h7" strokeWidth="1.300" />
        </svg>
      </button>
      <button aria-label="工具箱">
        <svg width="16" height="16" viewBox="0 0 16 16">
          <rect x="1" y="1" width="6" height="6" rx="2" fill="#5b6ef0" />
          <circle cx="12" cy="4" r="2.200" fill="none" stroke="#5b6ef0" strokeWidth="1.800" />
          <rect x="1" y="9" width="6" height="6" rx="2" fill="#b068b8" />
          <rect x="9" y="9" width="6" height="6" rx="2" fill="#7d68dd" />
        </svg>
      </button>
    </InputMethod>
  );
}

function SiteMark() {
  return (
    <Watermark>
      <svg width="42" height="40" viewBox="0 0 42 40">
        <defs>
          <linearGradient id="leaf" x1="0" y1="1" x2="1" y2="0">
            <stop offset="0" stopColor="#e6e04c" />
            <stop offset="1" stopColor="#35b46f" />
          </linearGradient>
        </defs>
        <path d="M41 1C20 2 4 12 1 23c-1 6 4 10 9 10-5-3-5-8-1-13C15 12 27 5 41 1z" fill="#4a9bdc" />
        <path d="M30 15c9-1 13 5 9 12C34 35 20 41 4 39c11-2 22-8 27-14 3-4 3-8-1-10z" fill="url(#leaf)" />
        <path d="M23 22c-2-4-9-3-11 1-1 4 3 7 8 6 8-2 12-9 8-13-4-3-11-1-15 2" fill="none" stroke="#4a9bdc" strokeWidth="2.500" />
      </svg>
      <div>
        <p>极光下载站</p>
        <p>www.xz7.com</p>
      </div>
    </Watermark>
  );
}

export default function App() {
  const [zoom, setZoom] = useState(58);

  return (
    <Page>
      <GlobalStyle />
      <TopBar />
      <Menu />
      <RibbonBar />
      <Body>
        <Workbook>
          <FormulaBar>
            <NameBox>
              <input aria-label="名称框" defaultValue="A2" />
              <Caret />
            </NameBox>
            <FormulaTools>
              <PlainButton aria-label="浏览公式结果">
                <Icon name="zoomOut" />
              </PlainButton>
              <Fx>fx</Fx>
            </FormulaTools>
            <FormulaInput aria-label="编辑栏" defaultValue="10" />
          </FormulaBar>
          <GridArea>
            <Sheet />
            <VScroll>
              <SplitHandle />
              <Track>
                <ScrollArrow aria-label="向上">
                  <Caret $dir="up" />
                </ScrollArrow>
                <Thumb $share={726} />
                <Rest $share={32} />
                <ScrollArrow aria-label="向下">
                  <Caret />
                </ScrollArrow>
              </Track>
            </VScroll>
          </GridArea>
          <SheetBar>
            <SheetTabs>
              {['first', 'prev', 'next', 'last'].map((name) => (
                <NavButton key={name} aria-label={name}>
                  <Icon name={name} />
                </NavButton>
              ))}
              <SheetTab>Sheet1</SheetTab>
              <PlainButton aria-label="新建工作表">
                <Icon name="sheetPlus" />
              </PlainButton>
            </SheetTabs>
            <HScroll>
              <PaneGrip />
              <Track $horizontal>
                <ScrollArrow $horizontal aria-label="向左">
                  <Caret $dir="left" />
                </ScrollArrow>
                <Thumb $share={635} />
                <Rest $share={54} />
                <ScrollArrow $horizontal aria-label="向右">
                  <Caret $dir="right" />
                </ScrollArrow>
              </Track>
              <PaneGrip />
            </HScroll>
          </SheetBar>
        </Workbook>
        <SidePanel>
          <Icon name="grip" />
          <SideTools>
            {sideTools.map((name) => (
              <SideButton key={name} aria-label={name}>
                <Icon name={name} />
              </SideButton>
            ))}
          </SideTools>
          <SideFooter>
            <PlainButton aria-label="更多工具">
              <Icon name="moreH" />
            </PlainButton>
          </SideFooter>
        </SidePanel>
      </Body>
      <StatusBar>
        <RecordButton aria-label="录制">
          <Icon name="record" />
        </RecordButton>
        <Divider $height={14} />
        <Summary>
          <span>平均值=60</span>
          <span>计数=11</span>
          <span>求和=660</span>
        </Summary>
        <ViewTools>
          <ViewButton $pressed aria-label="护眼模式">
            <Icon name="eye" />
          </ViewButton>
          <ViewButton $wide aria-label="阅读模式">
            <Icon name="cross" />
            <Caret />
          </ViewButton>
          <ViewDivider $height={14} />
          <ViewButton $pressed aria-label="普通视图">
            <Icon name="gridView" />
          </ViewButton>
          <ViewButton aria-label="分页预览">
            <Icon name="pageView" />
          </ViewButton>
          <ViewButton aria-label="页面布局">
            <Icon name="splitView" />
          </ViewButton>
          <ViewDivider $height={14} />
          <ZoomValue>
            160%
            <Caret />
          </ZoomValue>
          <PlainButton aria-label="缩小">
            <Icon name="minus" />
          </PlainButton>
          <ZoomRange
            type="range"
            aria-label="缩放"
            value={zoom}
            onChange={(e) => setZoom(e.target.value)}
          />
          <PlainButton aria-label="放大">
            <Icon name="plusBold" />
          </PlainButton>
          <ViewButton aria-label="全屏">
            <Icon name="fullscreen" />
          </ViewButton>
        </ViewTools>
      </StatusBar>
      <LevelMeter>
        <i />
      </LevelMeter>
      <ImeBar />
      <SiteMark />
    </Page>
  );
}
